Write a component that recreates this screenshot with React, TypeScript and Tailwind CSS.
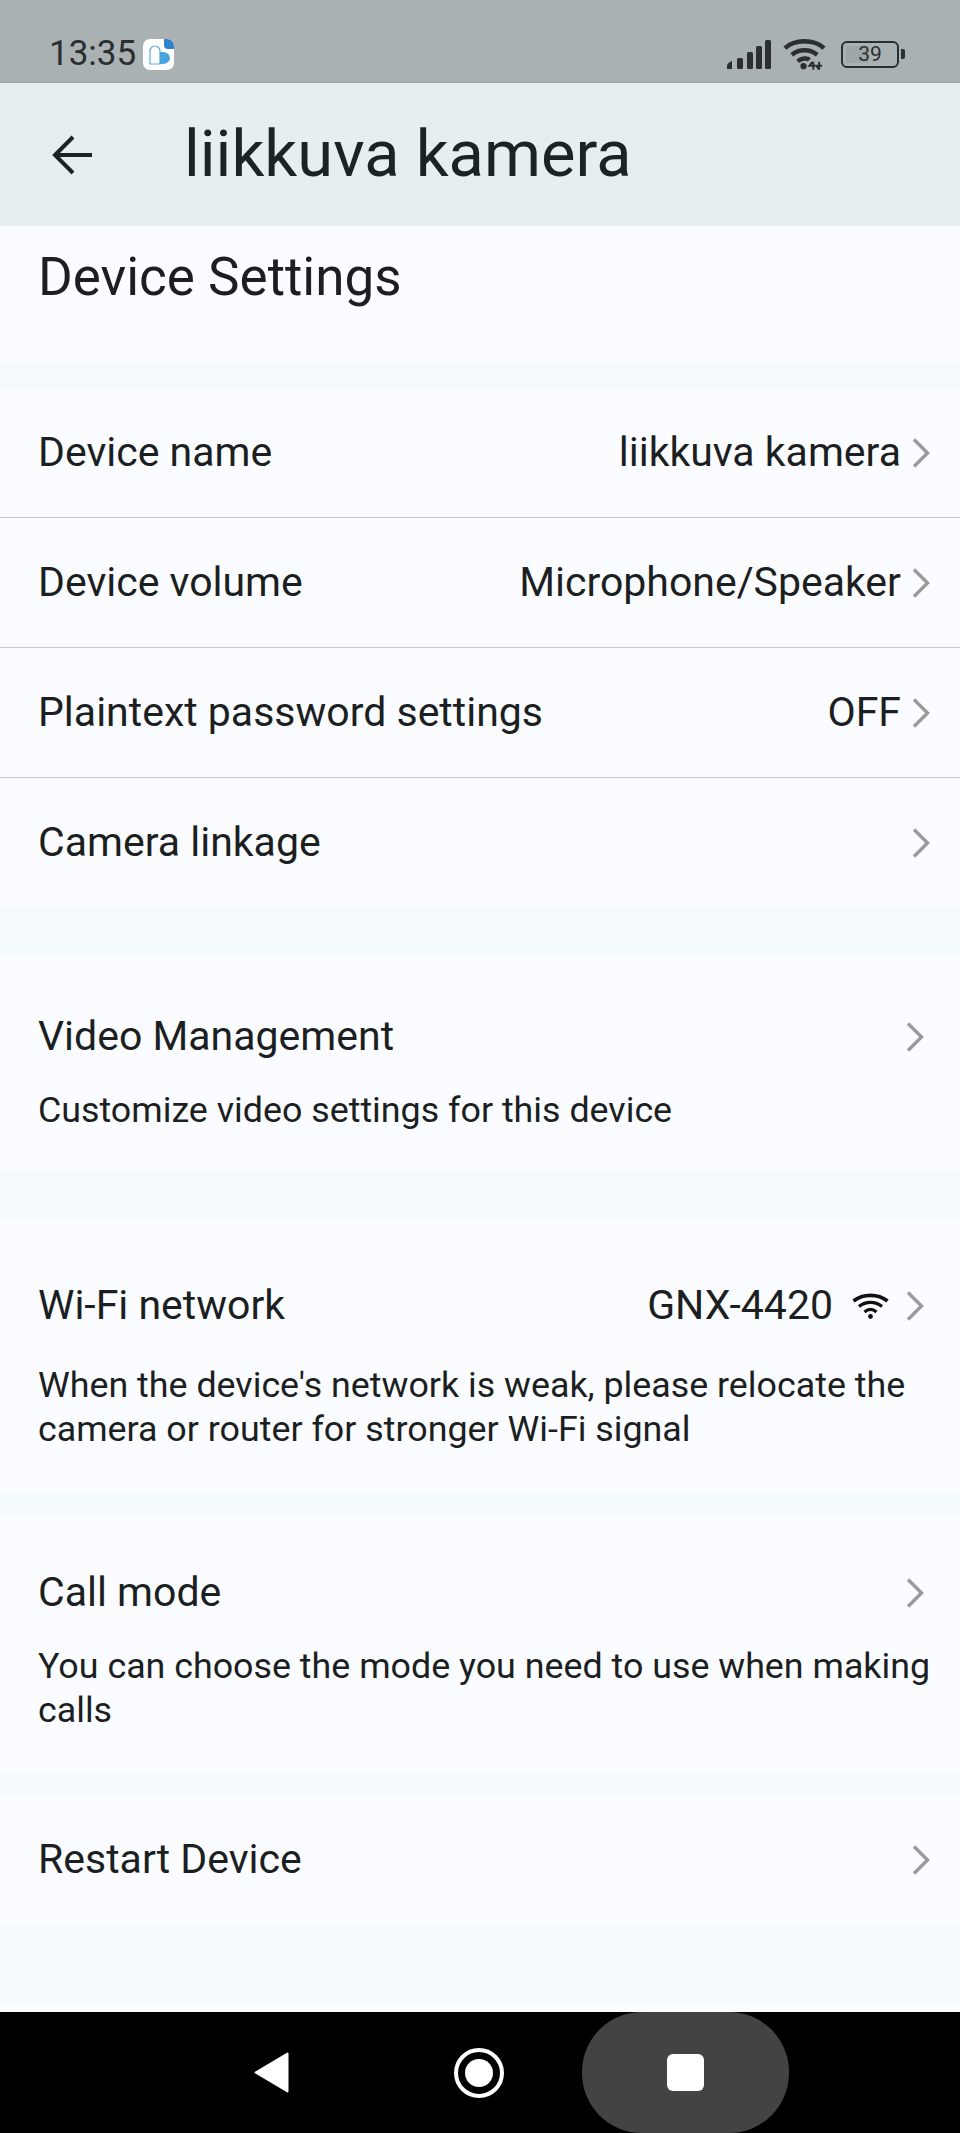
function Chevron() {
  return (
    <svg viewBox="0 0 18 30" className="w-[18px] h-[30px] shrink-0" fill="none">
      <path d="M2 1.5 L15.5 15 L2 28.5" stroke="#9a9a9a" strokeWidth="3.4" />
    </svg>
  );
}

function SmallWifi() {
  return (
    <svg viewBox="0 0 37 26" className="w-[37px] h-[26px] block" fill="none" stroke="#111">
      <path d="M1.5 8 C11 0.5 26 0.5 35.5 8" strokeWidth="3.6" />
      <path d="M7 13.5 C14 8 23 8 30 13.5" strokeWidth="3.4" />
      <path d="M12.5 19 C16.5 15.5 20.5 15.5 24.5 19" strokeWidth="3.2" />
      <circle cx="18.5" cy="23.5" r="2.4" fill="#111" stroke="none" />
    </svg>
  );
}

function StatusBar() {
  return (
    <div className="h-[82px] bg-[#aab1b3] flex items-end justify-between pl-[49px] pr-[55px] pb-[8px] shrink-0">
      <div className="flex items-center gap-[7px]">
        <span className="text-[35px] leading-[40px] text-[#2a2e30]">13:35</span>
        <div className="relative w-[31px] h-[31px] bg-white rounded-[7px] overflow-hidden">
          <svg viewBox="0 0 31 31" className="w-[31px] h-[31px]">
            <path d="M7 25 V12 a5 5 0 0 1 10 0 V25 Z" fill="#fff" stroke="#58a9dc" strokeWidth="1.2" />
            <path d="M17 13 h3 a7 6 0 0 1 0 12 h-3 Z" fill="#4aa3dc" />
          </svg>
          <div className="absolute right-0 top-0 w-[10px] h-[10px] bg-[#2f83cb] rounded-bl-[4px]" />
        </div>
      </div>
      <div className="flex items-center mb-[4px]">
        <svg viewBox="0 0 44 29" className="w-[44px] h-[29px]" fill="#2b2f31">
          <path d="M0 26 q0-3 5-5 v8 h-5 Z" />
          <rect x="10" y="18" width="6" height="11" rx="1.5" />
          <rect x="20" y="12" width="6" height="17" rx="1.5" />
          <rect x="29" y="6" width="6" height="23" rx="1.5" />
          <rect x="38" y="0" width="6" height="29" rx="1.5" />
        </svg>
        <svg viewBox="0 0 44 32" className="ml-[12px] w-[43px] h-[32px]" fill="none" stroke="#2b2f31">
          <path d="M2 10 C12 0.5 32 0.5 42 10" strokeWidth="4.6" />
          <path d="M9 17 C16 10.5 28 10.5 35 17" strokeWidth="4.6" />
          <path d="M15 23.5 C19 20 25 20 27 22" strokeWidth="4.6" />
          <circle cx="21" cy="28.5" r="3.2" fill="#2b2f31" stroke="none" />
          <path d="M30 24 L27 28 H33 M31 24 V32 M37 24 V32 M37 32 L34 28 H40" strokeWidth="2" />
        </svg>
        <div className="ml-[15px] flex items-center gap-[2px]">
          <div className="relative w-[58px] h-[27px] rounded-[6px] border-[2.5px] border-[#2b2f31] flex items-center justify-center overflow-hidden">
            <div className="absolute left-[3px] top-[3px] bottom-[3px] w-[42%] bg-[#9ea6a8] rounded-[2px]" />
            <span className="relative text-[21px] leading-none text-[#2b2f31]">39</span>
          </div>
          <div className="w-[4px] h-[10px] bg-[#2b2f31] rounded-r-[2px]" />
        </div>
      </div>
    </div>
  );
}

function Header() {
  return (
    <div className="h-[144px] bg-[#e6eef1] border-t border-[#a2aaac] flex items-center shrink-0">
      <svg viewBox="0 0 40 40" className="w-[40px] h-[40px] ml-[52px]" fill="none" stroke="#1c2326" strokeWidth="4">
        <path d="M40 20 H3" />
        <path d="M21 2 L3 20 L21 38" />
      </svg>
      <h1 className="ml-[92px] text-[65px] leading-none text-[#1c2326] font-normal">liikkuva kamera</h1>
    </div>
  );
}

function Row({ label, value, last }: { label: string; value?: string; last?: boolean }) {
  return (
    <div className={`h-[130px] flex items-center justify-between pl-[38px] pr-[30px] border-b ${last ? 'border-transparent' : 'border-[#c8cbcd]'}`}>
      <span className="text-[41px] text-[#1b1f22]">{label}</span>
      <div className="flex items-center gap-[11px]">
        {value && <span className="text-[41px] text-[#1b1f22]">{value}</span>}
        <Chevron />
      </div>
    </div>
  );
}

function Gap({ h }: { h: string }) {
  return <div className={`${h} bg-[#f5fafd]`} />;
}

export default function App() {
  return (
    <div className="w-[960px] h-[2133px] flex flex-col bg-[#fbfcff] overflow-hidden font-['Roboto',sans-serif]">
      <StatusBar />
      <Header />
      <div className="flex-1 flex flex-col min-h-0">
        <div className="h-[136px] pl-[38px] pt-[20px]">
          <h2 className="text-[53px] leading-[62px] text-[#1b1f22] font-normal">Device Settings</h2>
        </div>
        <Gap h="h-[26px]" />
        <Row label="Device name" value="liikkuva kamera" />
        <Row label="Device volume" value="Microphone/Speaker" />
        <Row label="Plaintext password settings" value="OFF" />
        <Row label="Camera linkage" last />
        <Gap h="h-[49px]" />
        <div className="h-[213px] pl-[38px] pr-[36px] pt-[50px]">
          <div className="flex items-center justify-between h-[60px]">
            <span className="text-[41px] text-[#1b1f22]">Video Management</span>
            <Chevron />
          </div>
          <p className="mt-[21px] text-[35.8px] leading-[44px] text-[#1b1f22]">Customize video settings for this device</p>
        </div>
        <Gap h="h-[51px]" />
        <div className="h-[270px] pl-[38px] pr-[36px] pt-[55px]">
          <div className="flex items-center justify-between h-[60px]">
            <span className="text-[41px] text-[#1b1f22]">Wi-Fi network</span>
            <div className="flex items-center">
              <span className="text-[41px] text-[#1b1f22]">GNX-4420</span>
              <span className="ml-[19px] mr-[17px]"><SmallWifi /></span>
              <Chevron />
            </div>
          </div>
          <p className="mt-[27px] text-[35.8px] leading-[44px] text-[#1b1f22]">When the device's network is weak, please relocate the camera or router for stronger Wi-Fi signal</p>
        </div>
        <Gap h="h-[24px]" />
        <div className="h-[256px] pl-[38px] pr-[20px] pt-[48px]">
          <div className="flex items-center justify-between h-[60px] pr-[16px]">
            <span className="text-[41px] text-[#1b1f22]">Call mode</span>
            <Chevron />
          </div>
          <p className="mt-[21px] text-[35.8px] leading-[44px] text-[#1b1f22]">You can choose the mode you need to use when making calls</p>
        </div>
        <Gap h="h-[24px]" />
        <Row label="Restart Device" last />
        <Gap h="h-[78px]" />
        <div className="flex-1" />
      </div>
      <div className="relative h-[121px] bg-black shrink-0 overflow-hidden">
        <div className="absolute left-[582px] top-0 w-[207px] h-[121px] rounded-[60px] bg-[#434343]" />
        <svg viewBox="0 0 35 41" className="absolute left-[254px] top-[40px] w-[35px] h-[41px]">
          <path d="M33.5 1.5 V39.5 L1.5 20.5 Z" fill="#fff" stroke="#fff" strokeWidth="2" strokeLinejoin="round" />
        </svg>
        <div className="absolute left-[454px] top-[36px] w-[50px] h-[50px] rounded-full border-[4px] border-white flex items-center justify-center">
          <div className="w-[28px] h-[28px] rounded-full bg-white" />
        </div>
        <div className="absolute left-[667px] top-[42px] w-[37px] h-[37px] rounded-[6px] bg-white" />
      </div>
    </div>
  );
}
